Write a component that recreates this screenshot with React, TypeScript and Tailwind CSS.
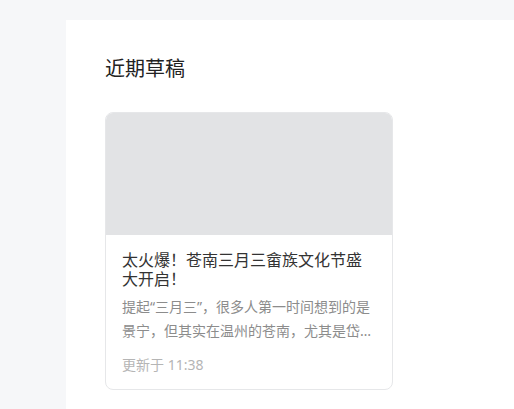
import React from 'react';

type Draft = {
  title: string;
  summary: string;
  updatedAt: string;
};

const drafts: Draft[] = [
  {
    title: '太火爆！苍南三月三畲族文化节盛大开启！',
    summary: '提起“三月三”，很多人第一时间想到的是景宁，但其实在温州的苍南，尤其是岱岭畲族乡，三月三的热闹一点也不输。',
    updatedAt: '11:38',
  },
];

const DraftCard: React.FC<{ draft: Draft }> = ({ draft }) => (
  <div className="w-[288px] rounded-lg border border-[#e6e7e9] bg-white overflow-hidden">
    <div className="h-[122px] bg-[#e2e3e5]" />
    <div className="px-4 pt-4 pb-[14px]">
      <h3 className="text-[16px] leading-[19px] text-[#333333]">{draft.title}</h3>
      <p className="mt-[6px] text-[14px] leading-6 text-[#8c8c8c] line-clamp-2">{draft.summary}</p>
      <p className="mt-3 text-[14px] leading-5 text-[#b5b5b5]">更新于 {draft.updatedAt}</p>
    </div>
  </div>
);

const App: React.FC = () => {
  return (
    <div
      className="min-h-screen bg-[#f6f7f9] pt-5 pl-[66px]"
      style={{ fontFamily: '"Noto Sans", "Noto Sans CJK SC", sans-serif' }}
    >
      <main className="min-h-[389px] bg-white pl-[39px] pt-[35px]">
        <h2 className="text-[20px] leading-7 text-[#222222] mb-[29px]">近期草稿</h2>
        <div className="flex gap-4">
          {drafts.map((d, i) => (
            <DraftCard key={i} draft={d} />
          ))}
        </div>
      </main>
    </div>
  );
};

export default App;
